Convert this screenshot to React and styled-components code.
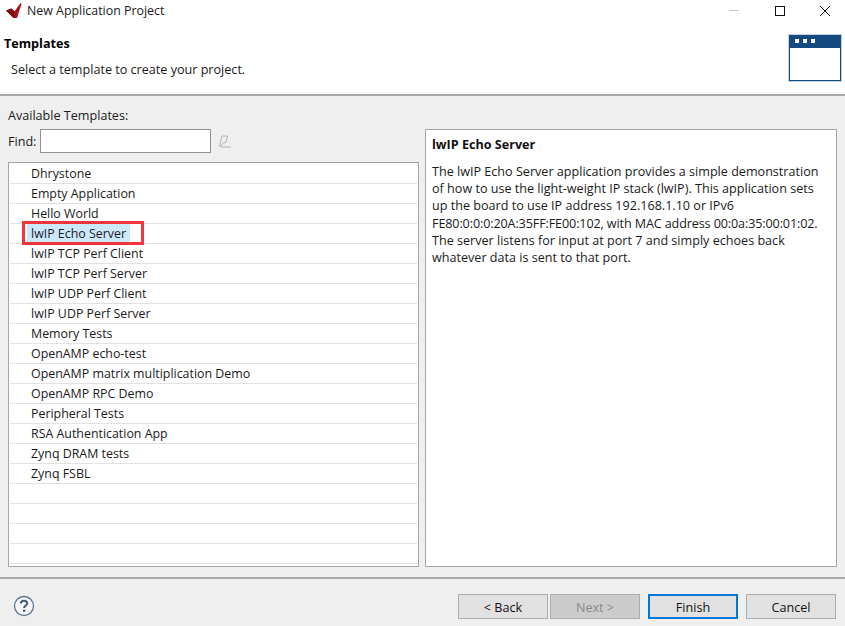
import React from "react";
import styled, { createGlobalStyle } from "styled-components";

const Global = createGlobalStyle`
  html, body { margin: 0; padding: 0; background: #f0f0f0; }
  * { box-sizing: border-box; }
`;
const Win = styled.div`
  width: 845px; height: 626px; display: flex; flex-direction: column; overflow: hidden;
  background: #efefef; color: #111; font-family: "Open Sans", "Noto Sans", sans-serif; font-size: 12.6px;
`;
const TitleBar = styled.div`
  height: 21px; background: #fff; display: flex; align-items: center; padding-left: 6px; flex: none;
`;
const TitleText = styled.span` margin-left: 5px; flex: 1; color: #1a1a1a; font-size: 12.4px; `;
const WinButtons = styled.div` display: flex; align-items: center; gap: 5.5px; `;
const WinButton = styled.div` width: 40px; height: 21px; display: flex; align-items: center; justify-content: center; `;
const Header = styled.div`
  height: 75px; flex: none; background: #fff; border-bottom: 2px solid #a9a9a9; display: flex; justify-content: space-between; padding: 14px 3px 0 4px;
`;
const HeaderText = styled.div` display: flex; flex-direction: column; `;
const HeaderTitle = styled.div` font-weight: 700; line-height: 18px; color: #000; `;
const HeaderSub = styled.div` margin-top: 8px; margin-left: 7px; line-height: 18px; color: #1a1a1a; `;
const HeaderIcon = styled.svg` margin-top: -1px; `;
const Body = styled.div`
  height: 483px; flex: none; padding: 11px 8px 0; display: flex; gap: 6px; border-bottom: 2px solid #a9a9a9;
`;
const LeftCol = styled.div` width: 411px; display: flex; flex-direction: column; `;
const AvailLabel = styled.div` line-height: 18px; color: #1a1a1a; height: 22px; `;
const FindRow = styled.div` display: flex; align-items: center; height: 24px; margin-bottom: 9px; `;
const FindLabel = styled.span` width: 32px; color: #1a1a1a; `;
const FindInput = styled.div` width: 171px; height: 24px; background: #fff; border: 1px solid #8f8f8f; `;
const ClearIcon = styled.svg` margin-left: 6px; `;
const List = styled.div`
  height: 405px; background: #fff; border: 1px solid #a5a5a5; padding: 1px; overflow: hidden;
`;
const Row = styled.div`
  position: relative; height: 20px; border-bottom: 1px solid #e2e2e2; padding-left: 21px; display: flex; align-items: center; color: #1a1a1a; font-size: 12.4px;
`;
const RowLabel = styled.span`
  display: inline-block; height: 19px; line-height: 19px; padding: 0 4px; margin-left: -4px;
  background: ${p => (p.$selected ? "#cce8ff" : "transparent")};
`;
const Highlight = styled.div`
  position: absolute; left: 12px; top: -3px; width: 122px; height: 24px; border: 3px solid #f0363c; pointer-events: none;
`;
const Panel = styled.div`
  width: 412px; height: 438px; margin-top: 22px; background: #fff; border: 1px solid #a5a5a5; padding: 6px;
`;
const PanelTitle = styled.div` font-weight: 700; line-height: 18px; color: #111; margin-bottom: 9px; `;
const PanelText = styled.div` line-height: 17.2px; color: #1a1a1a; white-space: pre-line; `;
const TightLine = styled.span` letter-spacing: -0.12px; `;
const Footer = styled.div`
  flex: 1; display: flex; align-items: flex-start; justify-content: space-between; padding: 15px 9px 0 13px;
`;
const Help = styled.svg` margin-top: 1px; `;
const Buttons = styled.div` display: flex; `;
const Btn = styled.div`
  width: 90px; height: 25px; margin-left: ${p => p.$gap}px; padding-top: 1px; display: flex; align-items: center; justify-content: center;
  border: ${p => (p.$default ? "2px solid #0078d7" : "1px solid #adadad")};
  background: ${p => (p.$disabled ? "#cccccc" : "#e1e1e1")};
  color: ${p => (p.$disabled ? "#8a8a8a" : "#111")};
`;

const items = ["Dhrystone","Empty Application","Hello World","lwIP Echo Server","lwIP TCP Perf Client","lwIP TCP Perf Server","lwIP UDP Perf Client","lwIP UDP Perf Server","Memory Tests","OpenAMP echo-test","OpenAMP matrix multiplication Demo","OpenAMP RPC Demo","Peripheral Tests","RSA Authentication App","Zynq DRAM tests","Zynq FSBL","","","","",""];

export default function App() {
  return (
    <Win>
      <Global />
      <TitleBar>
        <svg width="16" height="15" viewBox="0 0 16 15">
          <path d="M0 7.5 L5.5 5.5 L8.5 8.5 L14.5 0 L15.5 1 L11 15 L7.5 15 Z" fill="#a8141c" />
          <path d="M0 7.5 L5.5 5.5 L8.5 8.5 L8.5 15 L7.5 15 Z" fill="#7c0f14" />
        </svg>
        <TitleText>New Application Project</TitleText>
        <WinButtons>
          <WinButton>
            <svg width="12" height="12"><path d="M1 5.5H11" stroke="#c8c8c8" /></svg>
          </WinButton>
          <WinButton>
            <svg width="12" height="12"><rect x="1.5" y="1.5" width="9" height="9" fill="none" stroke="#111" /></svg>
          </WinButton>
          <WinButton>
            <svg width="12" height="12"><path d="M1 1L11 11M11 1L1 11" stroke="#111" /></svg>
          </WinButton>
        </WinButtons>
      </TitleBar>
      <Header>
        <HeaderText>
          <HeaderTitle>Templates</HeaderTitle>
          <HeaderSub>Select a template to create your project.</HeaderSub>
        </HeaderText>
        <HeaderIcon width="54" height="48" viewBox="0 0 54 48">
          <rect x="0.5" y="0.5" width="53" height="47" fill="#134b80" stroke="#c4d3e2" />
          <rect x="2" y="14" width="50" height="32" fill="#fff" />
          <rect x="7" y="5" width="4" height="4" fill="#fff" />
          <rect x="15" y="5" width="4" height="4" fill="#fff" />
          <rect x="23" y="5" width="4" height="4" fill="#fff" />
        </HeaderIcon>
      </Header>
      <Body>
        <LeftCol>
          <AvailLabel>Available Templates:</AvailLabel>
          <FindRow>
            <FindLabel>Find:</FindLabel>
            <FindInput />
            <ClearIcon width="16" height="16" viewBox="0 0 16 16">
              <path d="M2.5 13L5 3H10.5L9 9.5H6.5L4 13ZM4 14H14" fill="none" stroke="#b5b5b5" />
            </ClearIcon>
          </FindRow>
          <List>
            {items.map((t, i) => (
              <Row key={i}>
                {t && <RowLabel $selected={i === 3}>{t}</RowLabel>}
                {i === 3 && <Highlight />}
              </Row>
            ))}
          </List>
        </LeftCol>
        <Panel>
          <PanelTitle>lwIP Echo Server</PanelTitle>
          <PanelText>
            {`The lwIP Echo Server application provides a simple demonstration
of how to use the light-weight IP stack (lwIP). This application sets
up the board to use IP address 192.168.1.10 or IPv6
`}
            <TightLine>FE80:0:0:0:20A:35FF:FE00:102, with MAC address 00:0a:35:00:01:02.</TightLine>
            {`
The server listens for input at port 7 and simply echoes back
whatever data is sent to that port.`}
          </PanelText>
        </Panel>
      </Body>
      <Footer>
        <Help width="22" height="22" viewBox="0 0 22 22">
          <circle cx="11" cy="11" r="9.5" fill="#f4f6f9" stroke="#5f7699" strokeWidth="1.3" />
          <path d="M7.8 8.6C7.8 6.8 9.2 5.8 11 5.8C12.9 5.8 14.2 6.9 14.2 8.4C14.2 10.6 11.1 10.6 11.1 13" fill="none" stroke="#445a80" strokeWidth="2" />
          <rect x="10" y="14.6" width="2.2" height="2.2" fill="#445a80" />
        </Help>
        <Buttons>
          <Btn $gap={0}>&lt; Back</Btn>
          <Btn $gap={2} $disabled>Next &gt;</Btn>
          <Btn $gap={8} $default>Finish</Btn>
          <Btn $gap={8}>Cancel</Btn>
        </Buttons>
      </Footer>
    </Win>
  );
}
